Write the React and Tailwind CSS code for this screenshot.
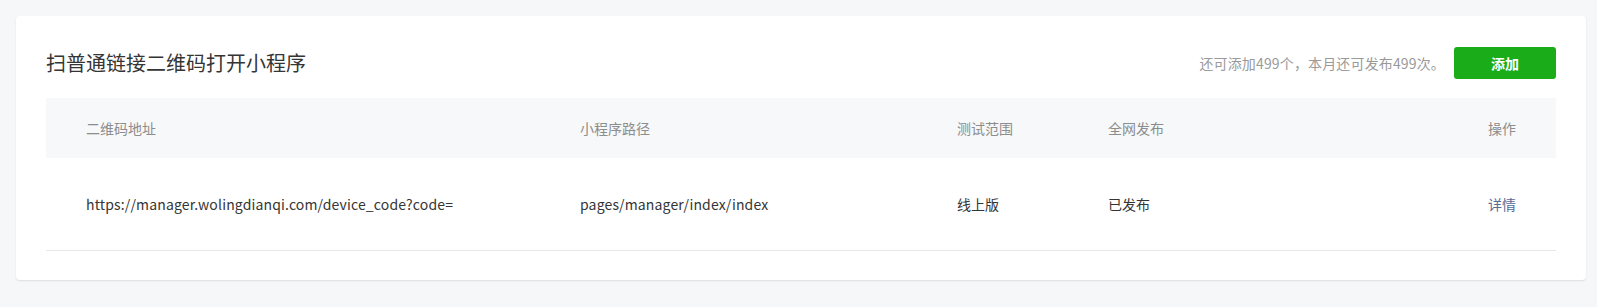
export default function App() {
  const font = { fontFamily: '"Noto Sans CJK SC", "Noto Sans", sans-serif' };
  return (
    <div className="min-h-[307px] w-full bg-[#f6f7f9] pt-4 pl-4 pr-[11px]" style={font}>
      <div className="rounded bg-white shadow-[0_1px_2px_rgba(0,0,0,0.1)] px-[30px] pt-[31px] pb-[29px]">
        <div className="flex items-center h-8">
          <h2 className="flex-1 text-[20px] leading-8 text-[#353535] font-normal">扫普通链接二维码打开小程序</h2>
          <span className="text-[14px] text-[#9a9a9a] tracking-[0.15px] mr-[9px]">还可添加499个，本月还可发布499次。</span>
          <button className="w-[102px] h-8 rounded-[3px] bg-[#1aad19] text-white text-[14px] font-bold">添加</button>
        </div>
        <div className="mt-[19px]">
          <div className="flex items-center h-[60px] bg-[#f6f8f9] px-10 text-[14px] text-[#8d8d8d]">
            <div className="w-[494px]">二维码地址</div>
            <div className="w-[377px]">小程序路径</div>
            <div className="w-[151px]">测试范围</div>
            <div className="flex-1">全网发布</div>
            <div className="text-right">操作</div>
          </div>
          <div className="flex items-center h-[93px] border-b border-[#e7e7eb] px-10 text-[14px] text-[#353535]">
            <div className="w-[494px] tracking-[0.15px]">https://manager.wolingdianqi.com/device_code?code=</div>
            <div className="w-[377px] tracking-[0.15px]">pages/manager/index/index</div>
            <div className="w-[151px]">线上版</div>
            <div className="flex-1">已发布</div>
            <a className="text-right text-[#576b95] cursor-pointer">详情</a>
          </div>
        </div>
      </div>
    </div>
  );
}
